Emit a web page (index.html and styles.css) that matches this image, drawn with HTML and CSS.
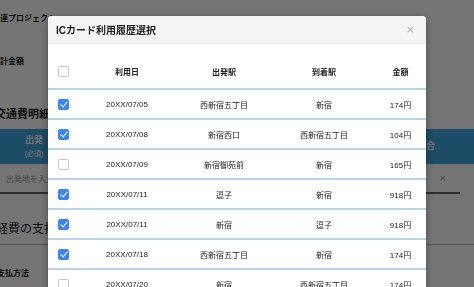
FILE: index.html
```html
<!DOCTYPE html>
<html lang="ja">
<head>
    <meta charset="UTF-8">
    <meta name="viewport" content="width=device-width, initial-scale=1.0">
    <title>交通費精算</title>
    <link rel="stylesheet" href="styles.css">
</head>
<body>

<!-- Background form -->
<div class="page">
    <p class="field-label first">関連プロジェクト</p>
    <p class="field-label total">合計金額</p>

    <h2 class="section-title">交通費明細</h2>
    <div class="detail-head">
        <div class="head-cell">出発<span>(必須)</span></div>
        <div class="head-rest">合</div>
    </div>
    <div class="detail-row">
        <span class="placeholder">出発地を入力</span>
        <span class="remove">×</span>
    </div>

    <h2 class="section-title big">経費の支払い</h2>
    <p class="field-label pay">支払方法</p>
</div>

<!-- IC card modal -->
<div class="overlay"></div>
<div class="modal">
    <div class="modal-header">
        <h3>ICカード利用履歴選択</h3>
        <span class="close">×</span>
    </div>
    <table class="history">
        <thead>
            <tr>
                <th><span class="check"></span></th>
                <th>利用日</th>
                <th>出発駅</th>
                <th>到着駅</th>
                <th>金額</th>
            </tr>
        </thead>
        <tbody>
            <tr><td><span class="check on"></span></td><td>20XX/07/05</td><td>西新宿五丁目</td><td>新宿</td><td>174円</td></tr>
            <tr><td><span class="check on"></span></td><td>20XX/07/08</td><td>新宿西口</td><td>西新宿五丁目</td><td>104円</td></tr>
            <tr><td><span class="check"></span></td><td>20XX/07/09</td><td>新宿御苑前</td><td>新宿</td><td>165円</td></tr>
            <tr><td><span class="check on"></span></td><td>20XX/07/11</td><td>逗子</td><td>新宿</td><td>918円</td></tr>
            <tr><td><span class="check on"></span></td><td>20XX/07/11</td><td>新宿</td><td>逗子</td><td>918円</td></tr>
            <tr><td><span class="check on"></span></td><td>20XX/07/18</td><td>西新宿五丁目</td><td>新宿</td><td>174円</td></tr>
            <tr><td><span class="check"></span></td><td>20XX/07/20</td><td>新宿</td><td>西新宿五丁目</td><td>174円</td></tr>
        </tbody>
    </table>
</div>

</body>
</html>
```

FILE: styles.css
```css
body {
    margin: 0;
    padding: 0;
    background: #fff;
    color: #222;
    font-family: 'Liberation Sans', 'Noto Sans CJK JP', sans-serif;
    overflow: hidden;
}

p, h2, h3 {
    margin: 0;
}

.page {
    height: 287px;
}

.field-label {
    font-size: 8px;
    font-weight: bold;
    line-height: 12px;
    text-indent: -8px;
}

.first {
    padding-top: 13px;
}

.total {
    margin-top: 31px;
}

.section-title {
    font-size: 11px;
    font-weight: bold;
    line-height: 16px;
    margin-top: 38px;
    text-indent: -5px;
}

.section-title.big {
    font-size: 12px;
    font-weight: normal;
    line-height: 18px;
    margin-top: 26px;
    padding-bottom: 6px;
    border-bottom: 1px solid #bbb;
    text-indent: -4px;
}

.detail-head {
    display: flex;
    height: 35px;
    margin-top: 7px;
    background: #3ea5df;
    color: #fff;
}

.head-cell {
    width: 68px;
    display: flex;
    flex-direction: column;
    align-items: center;
    justify-content: center;
    font-size: 9px;
    font-weight: bold;
    line-height: 13px;
}

.head-cell span {
    font-size: 7px;
    font-weight: normal;
}

.head-rest {
    flex: 1;
    font-size: 9px;
    font-weight: bold;
    line-height: 35px;
    padding-left: 358px;
}

.detail-row {
    display: flex;
    justify-content: space-between;
    align-items: center;
    height: 28px;
    border-bottom: 2px solid #666;
    margin-right: 14px;
}

.placeholder {
    font-size: 8px;
    color: #999;
    padding-left: 6px;
}

.remove {
    font-size: 11px;
    color: #999;
    padding-right: 14px;
}

.field-label.pay {
    margin-top: 23px;
    text-indent: -3px;
}

.overlay {
    position: fixed;
    top: 0;
    left: 0;
    right: 0;
    bottom: 0;
    background: rgba(0, 0, 0, 0.54);
}

.modal {
    position: fixed;
    top: 16px;
    left: 48px;
    width: 378px;
    bottom: -40px;
    background: #fff;
    border-radius: 4px;
    box-shadow: 0 2px 8px rgba(0, 0, 0, 0.35);
    overflow: hidden;
}

.modal-header {
    display: flex;
    justify-content: space-between;
    align-items: center;
    height: 27px;
    padding: 0 12px 0 8px;
    background: #f4f4f4;
    border-bottom: 1px solid #ececec;
}

.modal-header h3 {
    font-size: 10px;
    font-weight: bold;
    color: #222;
}

.close {
    font-size: 13px;
    color: #aaa;
}

.history {
    width: 100%;
    border-collapse: collapse;
    table-layout: fixed;
    margin-top: 10px;
}

.history th,
.history td {
    text-align: center;
    padding: 0;
    color: #222;
}

.history th {
    font-size: 8px;
    font-weight: bold;
    height: 34px;
    border-bottom: 2px solid #b9d4e4;
}

.history td {
    font-size: 8px;
    height: 28px;
    border-bottom: 2px solid #b9d4e4;
}

.history th:nth-child(1) { width: 31px; }
.history th:nth-child(2) { width: 96px; }
.history th:nth-child(3) { width: 98px; }
.history th:nth-child(4) { width: 102px; }

.check {
    display: inline-block;
    width: 11px;
    height: 11px;
    box-sizing: border-box;
    border: 1px solid #c8c8c8;
    border-radius: 2px;
    background: #fff;
    vertical-align: middle;
    position: relative;
}

.check.on {
    background: #3a86f0;
    border-color: #3a86f0;
}

.check.on::after {
    content: "";
    position: absolute;
    left: 3px;
    top: 0px;
    width: 3px;
    height: 6px;
    border: solid #fff;
    border-width: 0 1.5px 1.5px 0;
    transform: rotate(40deg);
}
```
